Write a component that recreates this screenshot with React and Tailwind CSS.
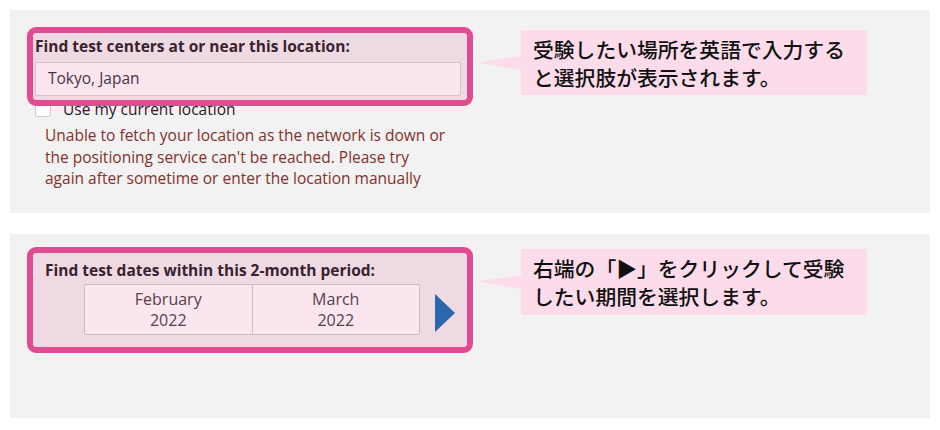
import React from "react";

const sans = { fontFamily: '"Open Sans", "Noto Sans", sans-serif' };
const jp = { fontFamily: '"Noto Sans CJK JP", "Noto Sans", sans-serif' };

const Frame = ({ className }) => (
    <div
        className={`pointer-events-none absolute rounded-[9px] border-[6px] border-[#e04b92] bg-[rgba(225,50,130,0.12)] ${className}`}
    />
);

const Callout = ({ lines, className }) => (
    <div className={`relative ml-[60px] w-[346px] bg-[#fcdcea] pl-3 pt-[5px] ${className}`} style={jp}>
        <svg className="absolute left-[-44px] top-[26px]" width="44" height="14" viewBox="0 0 44 14">
            <polygon points="0,6.5 44,0 44,14" fill="#fcdcea" />
        </svg>
        {lines.map((l) => (
            <div key={l} className="text-[20.8px] font-medium leading-[28px] text-[#111]">
                {l}
            </div>
        ))}
    </div>
);

const App = () => {
    return (
        <div className="flex h-[430px] w-[940px] flex-col gap-[21px] bg-white p-[10px]" style={sans}>
            {/* location panel */}
            <div className="flex h-[203px] w-[920px] items-start bg-[#f2f2f2] pl-[25px] pt-[26px]">
                <div className="relative w-[426px] shrink-0">
                    <div className="text-[15.5px] font-bold leading-[21px] text-[#222]">
                        Find test centers at or near this location:
                    </div>
                    <div className="mt-[5px] flex h-[34px] items-center rounded-[2px] border border-[#d6d6d6] bg-white pl-3 text-[15.5px] text-[#333]">
                        Tokyo, Japan
                    </div>
                    <div className="mt-[3px] flex items-center gap-[12px]">
                        <div className="h-[16px] w-[16px] rounded-[2px] border border-[#ccc] bg-white" />
                        <span className="text-[15.5px] leading-[20px] text-[#222]">Use my current location</span>
                    </div>
                    <div className="mt-[6px] pl-[10px] text-[15.5px] leading-[21.5px] text-[#84302c]">
                        Unable to fetch your location as the network is down or
                        <br />
                        the positioning service can't be reached. Please try
                        <br />
                        again after sometime or enter the location manually
                    </div>
                    <Frame className="left-[-8px] top-[-9px] h-[79px] w-[446px]" />
                </div>
                <Callout
                    className="mt-[-6px] h-[65px]"
                    lines={["受験したい場所を英語で入力する", "と選択肢が表示されます。"]}
                />
            </div>

            {/* date panel */}
            <div className="flex h-[184px] w-[920px] items-start bg-[#f2f2f2] pl-[35px] pt-[26px]">
                <div className="relative w-[416px] shrink-0">
                    <div className="text-[15.5px] font-bold leading-[21px] text-[#222]">
                        Find test dates within this 2-month period:
                    </div>
                    <div className="mt-[3px] flex items-center">
                        <div className="ml-[39px] flex h-[51px] w-[336px] rounded-[2px] border border-[#cfcfcf] bg-white text-[16px] leading-[21px] text-[#444]">
                            <div className="flex flex-1 flex-col items-center justify-center border-r border-[#cfcfcf]">
                                <span>February</span>
                                <span>2022</span>
                            </div>
                            <div className="flex flex-1 flex-col items-center justify-center">
                                <span>March</span>
                                <span>2022</span>
                            </div>
                        </div>
                        <svg className="relative z-10 ml-[15px] mt-[7px]" width="20" height="38" viewBox="0 0 20 38">
                            <polygon points="0,0 20,19 0,38" fill="#2a67ad" />
                        </svg>
                    </div>
                    <Frame className="left-[-18px] top-[-13px] h-[106px] w-[446px]" />
                </div>
                <Callout
                    className="mt-[-11px] h-[66px]"
                    lines={["右端の「▶」をクリックして受験", "したい期間を選択します。"]}
                />
            </div>
        </div>
    );
};

export default App;
